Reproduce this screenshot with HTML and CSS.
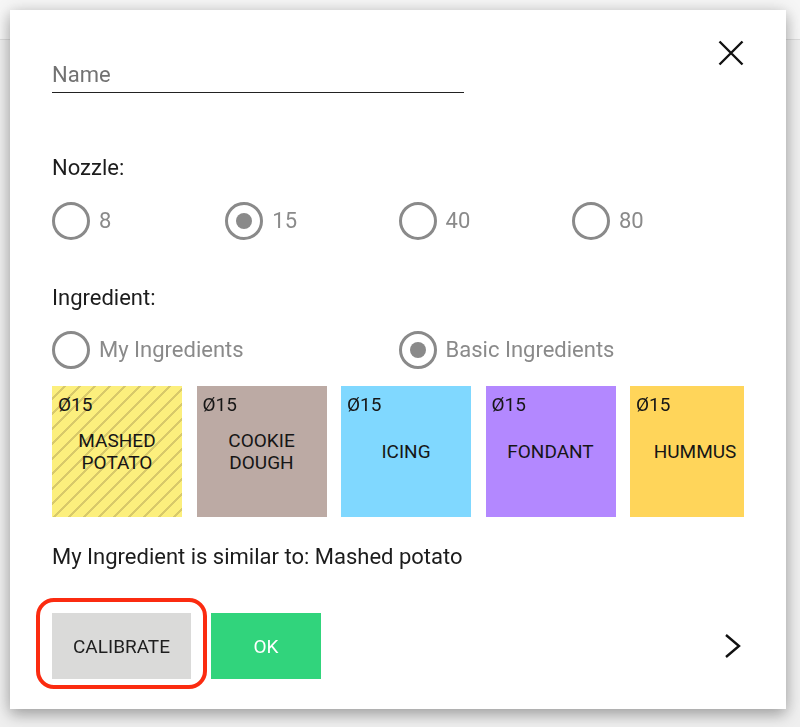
FILE: index.html
```html
<!DOCTYPE html>
<html lang="en">
<head>
<meta charset="utf-8">
<title>Ingredient</title>
<link rel="stylesheet" href="styles.css">
</head>
<body>
<div class="page">
  <div class="toolbar"></div>
</div>
<div class="backdrop">
  <div class="dialog">
    <div class="dialog-head">
      <input class="name-field" type="text" placeholder="Name">
      <button class="icon-btn close" aria-label="Close">
        <svg width="26" height="26" viewBox="0 0 26 26"><path d="M1.5 1.5 L24.5 24.5 M24.5 1.5 L1.5 24.5" stroke="#111" stroke-width="2.4" fill="none"/></svg>
      </button>
    </div>

    <div class="section-label nozzle-label">Nozzle:</div>
    <div class="radio-grid">
      <span class="radio"><span class="radio-circle"></span><span class="radio-text">8</span></span>
      <span class="radio is-checked"><span class="radio-circle"></span><span class="radio-text">15</span></span>
      <span class="radio"><span class="radio-circle"></span><span class="radio-text">40</span></span>
      <span class="radio"><span class="radio-circle"></span><span class="radio-text">80</span></span>
    </div>

    <div class="section-label ingredient-label">Ingredient:</div>
    <div class="radio-grid source-grid">
      <span class="radio"><span class="radio-circle"></span><span class="radio-text">My Ingredients</span></span>
      <span class="radio is-checked"><span class="radio-circle"></span><span class="radio-text">Basic Ingredients</span></span>
    </div>

    <div class="tiles">
      <div class="tile tile-potato"><span class="tile-size">Ø15</span><span class="tile-name">Mashed potato</span></div>
      <div class="tile tile-cookie"><span class="tile-size">Ø15</span><span class="tile-name">Cookie dough</span></div>
      <div class="tile tile-icing"><span class="tile-size">Ø15</span><span class="tile-name">Icing</span></div>
      <div class="tile tile-fondant"><span class="tile-size">Ø15</span><span class="tile-name">Fondant</span></div>
      <div class="tile tile-hummus"><span class="tile-size">Ø15</span><span class="tile-name">Hummus</span></div>
    </div>

    <div class="similar">My Ingredient is similar to: Mashed potato</div>

    <div class="actions">
      <button class="btn btn-calibrate">CALIBRATE</button>
      <button class="btn btn-ok">OK</button>
      <button class="icon-btn next" aria-label="Next">
        <svg width="20" height="28" viewBox="0 0 20 28"><path d="M2 3 L15 14 L2 25" stroke="#111" stroke-width="2.4" fill="none"/></svg>
      </button>
      <span class="highlight"></span>
    </div>
  </div>
</div>
</body>
</html>
```

FILE: styles.css
```css
* { box-sizing: border-box; }

body {
  margin: 0;
  background: #efefef;
  font-family: Roboto, "Noto Sans", sans-serif;
}

.toolbar {
  height: 40px;
  background: #f6f6f6;
  border-bottom: 1px solid #dcdcdc;
}

.backdrop {
  position: fixed;
  inset: 0;
  padding: 10px;
}

.dialog {
  width: 776px;
  background: #fff;
  padding: 30px 42px;
  box-shadow: 0 6px 14px rgba(0, 0, 0, 0.28), 0 0 18px rgba(0, 0, 0, 0.12);
}

.dialog-head {
  display: flex;
  justify-content: space-between;
  align-items: flex-start;
}

.name-field {
  margin-top: 21px;
  width: 412px;
  height: 31.5px;
  padding: 0 0 4px;
  border: none;
  border-bottom: 1.5px solid #222;
  font-family: Roboto, sans-serif;
  font-size: 22px;
  line-height: 26px;
  color: #222;
  background: transparent;
  outline: none;
}

.name-field::placeholder { color: #727272; }

.icon-btn {
  padding: 0;
  border: 0;
  background: none;
  display: block;
}

.icon-btn svg { display: block; }

.section-label,
.similar {
  font-size: 22px;
  line-height: 26px;
  color: #1c1c1c;
}

.nozzle-label { margin-top: 62.5px; }

.radio-grid {
  display: grid;
  grid-template-columns: repeat(4, 173.3px);
  margin-top: 21px;
}

.radio {
  display: flex;
  align-items: center;
  gap: 9px;
  height: 38px;
  font-size: 22px;
  line-height: 26px;
  color: #8a8a8a;
}

.radio-circle {
  flex: none;
  width: 38px;
  height: 38px;
  border: 3px solid #8a8a8a;
  border-radius: 50%;
  display: flex;
  align-items: center;
  justify-content: center;
}

.radio.is-checked .radio-circle::after {
  content: "";
  width: 16px;
  height: 16px;
  border-radius: 50%;
  background: #8a8a8a;
}

.ingredient-label { margin-top: 45px; }

.source-grid {
  grid-template-columns: 346.6px 346.6px;
  margin-top: 20px;
}

.tiles {
  display: flex;
  gap: 14.5px;
  margin-top: 17px;
  overflow: hidden;
}

.tile {
  position: relative;
  flex: none;
  width: 130px;
  height: 131px;
  display: flex;
  align-items: center;
  justify-content: center;
  padding: 0 8px;
  text-align: center;
  font-size: 19px;
  line-height: 22px;
  color: #161616;
  text-transform: uppercase;
}

.tile-size {
  position: absolute;
  left: 6px;
  top: 8px;
  text-transform: none;
}

.tile-potato {
  background: repeating-linear-gradient(135deg, #fcef7d 0 8.2px, #d8c96a 8.2px 10.6px);
}
.tile-cookie { background: #bcaaa4; }
.tile-icing { background: #80d8ff; }
.tile-fondant { background: #b388ff; }
.tile-hummus { background: #ffd55a; }

.similar { margin-top: 27px; }

.actions {
  position: relative;
  display: flex;
  align-items: center;
  margin-top: 43px;
}

.btn {
  height: 66px;
  border: 0;
  padding: 0;
  font-family: Roboto, sans-serif;
  font-size: 19px;
}

.btn-calibrate {
  width: 139px;
  background: #dadad9;
  color: #1e1e1e;
}

.btn-ok {
  width: 110px;
  margin-left: 20px;
  background: #31d47c;
  color: #fff;
}

.next { margin-left: auto; }

.highlight {
  position: absolute;
  left: -16px;
  top: -15px;
  width: 171px;
  height: 91px;
  border: 4px solid #fb2b10;
  border-radius: 18px;
  pointer-events: none;
}
```
